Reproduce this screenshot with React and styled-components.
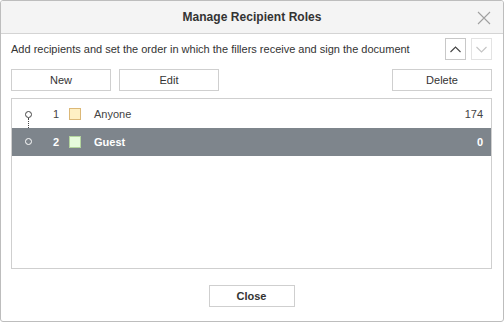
import React from "react";
import styled, { createGlobalStyle } from "styled-components";

const Global = createGlobalStyle`
  html, body { margin: 0; padding: 0; background: #ffffff; }
  body { font-family: "Liberation Sans", Arial, sans-serif; }
  * { box-sizing: border-box; }
`;

const Dialog = styled.div`
  width: 504px;
  height: 322px;
  border: 1px solid #bdbdbd;
  border-radius: 3px;
  background: #fff;
  display: flex;
  flex-direction: column;
  overflow: hidden;
`;

const Header = styled.div`
  height: 33px;
  flex: none;
  background: #f4f4f4;
  border-bottom: 1px solid #d4d4d4;
  display: flex;
  align-items: center;
  justify-content: center;
  position: relative;
`;

const Title = styled.div`
  font-size: 12px;
  font-weight: bold;
  color: #333;
  letter-spacing: 0.05px;
`;

const CloseX = styled.button`
  position: absolute;
  right: 12px;
  top: 10px;
  width: 14px;
  height: 14px;
  padding: 0;
  border: none;
  background: none;
  display: flex;
`;

const Body = styled.div`
  flex: 1;
  padding: 4px 11px 0 10px;
  display: flex;
  flex-direction: column;
`;

const InfoRow = styled.div`
  height: 22px;
  display: flex;
  align-items: center;
  justify-content: space-between;
`;

const Info = styled.div`
  font-size: 11px;
  color: #333;
`;

const Arrows = styled.div`
  display: flex;
  gap: 5px;
`;

const ArrowBtn = styled.button`
  width: 21px;
  height: 22px;
  padding: 0;
  background: #fff;
  border: 1px solid ${(p) => (p.disabled ? "#e3e3e3" : "#c8c8c8")};
  display: flex;
  align-items: center;
  justify-content: center;
`;

const Toolbar = styled.div`
  margin-top: 9px;
  display: flex;
  gap: 8px;
`;

const Btn = styled.button`
  width: 100px;
  height: 22px;
  background: #fff;
  border: 1px solid #cfcfcf;
  font-family: "Liberation Sans", Arial, sans-serif;
  font-size: 11px;
  color: #333;
  padding: 0;
  margin-left: ${(p) => (p.$push ? "auto" : "0")};
`;

const List = styled.div`
  margin-top: 7px;
  height: 171px;
  border: 1px solid #cfcfcf;
  padding-top: 1px;
  display: flex;
  flex-direction: column;
`;

const Row = styled.div`
  height: 28px;
  display: flex;
  align-items: center;
  background: ${(p) => (p.$selected ? "#7e858c" : "transparent")};
  color: ${(p) => (p.$selected ? "#fff" : "#444")};
  font-weight: ${(p) => (p.$selected ? "bold" : "normal")};
  font-size: 11px;
  padding-right: 8px;
  position: relative;
`;

const Node = styled.div`
  width: 34px;
  height: 100%;
  position: relative;
  flex: none;
`;

const Dot = styled.span`
  position: absolute;
  left: 13px;
  top: ${(p) => (p.$first ? "11px" : "10px")};
  width: 7px;
  height: 7px;
  border-radius: 50%;
  border: 1px solid ${(p) => (p.$light ? "#fff" : "#444")};
`;

const Link = styled.span`
  position: absolute;
  left: 16px;
  top: 18px;
  height: 20px;
  border-left: 1px dotted #444;
`;

const Num = styled.div`
  width: 20px;
  text-align: center;
  flex: none;
`;

const Swatch = styled.div`
  width: 12px;
  height: 12px;
  margin-left: 3px;
  margin-right: 13px;
  flex: none;
  background: ${(p) => p.$bg};
  border: 1px solid ${(p) => p.$border};
`;

const Name = styled.div`
  flex: 1;
`;

const Count = styled.div`
  text-align: right;
`;

const Footer = styled.div`
  display: flex;
  justify-content: center;
  padding-top: 16px;
`;

const CloseBtn = styled(Btn)`
  width: 86px;
  font-weight: bold;
`;

const roles = [
  { n: 1, name: "Anyone", count: 174, bg: "#fff0c4", border: "#dcb877" },
  { n: 2, name: "Guest", count: 0, bg: "#e6fadc", border: "#b3d49e", selected: true },
];

export default function App() {
  return (
    <>
      <Global />
      <Dialog>
        <Header>
          <Title>Manage Recipient Roles</Title>
          <CloseX aria-label="Close">
            <svg width="14" height="14" viewBox="0 0 14 14">
              <path d="M1 1 L13 13 M13 1 L1 13" stroke="#a0a0a0" strokeWidth="1.1" fill="none" />
            </svg>
          </CloseX>
        </Header>
        <Body>
          <InfoRow>
            <Info>Add recipients and set the order in which the fillers receive and sign the document</Info>
            <Arrows>
              <ArrowBtn>
                <svg width="11" height="7" viewBox="0 0 11 7">
                  <path d="M0.5 6 L5.5 1 L10.5 6" stroke="#444" strokeWidth="1.1" fill="none" />
                </svg>
              </ArrowBtn>
              <ArrowBtn disabled>
                <svg width="11" height="7" viewBox="0 0 11 7">
                  <path d="M0.5 1 L5.5 6 L10.5 1" stroke="#c4c4c4" strokeWidth="1.1" fill="none" />
                </svg>
              </ArrowBtn>
            </Arrows>
          </InfoRow>
          <Toolbar>
            <Btn>New</Btn>
            <Btn>Edit</Btn>
            <Btn $push>Delete</Btn>
          </Toolbar>
          <List>
            {roles.map((r, i) => (
              <Row key={r.n} $selected={r.selected}>
                <Node>
                  <Dot $first={i === 0} $light={r.selected} />
                  {i === 0 && <Link />}
                </Node>
                <Num>{r.n}</Num>
                <Swatch $bg={r.bg} $border={r.border} />
                <Name>{r.name}</Name>
                <Count>{r.count}</Count>
              </Row>
            ))}
          </List>
          <Footer>
            <CloseBtn>Close</CloseBtn>
          </Footer>
        </Body>
      </Dialog>
    </>
  );
}
